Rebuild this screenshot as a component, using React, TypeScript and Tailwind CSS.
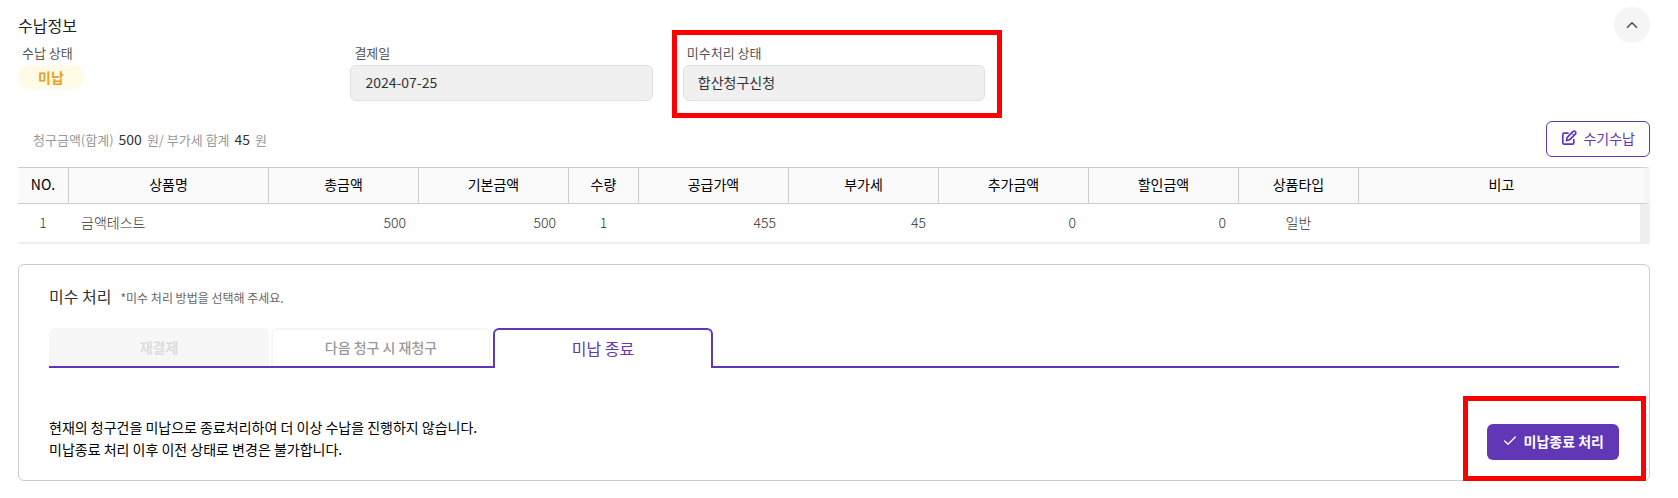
import { useState } from 'react'
import { Check, ChevronUp } from 'lucide-react'
import { clsx } from 'clsx'

const columns = [
  { label: 'NO.', width: 'w-[51px]', value: '1', align: 'text-center' },
  { label: '상품명', width: 'w-[200px]', value: '금액테스트', align: 'text-left' },
  { label: '총금액', width: 'w-[150px]', value: '500', align: 'text-right' },
  { label: '기본금액', width: 'w-[150px]', value: '500', align: 'text-right' },
  { label: '수량', width: 'w-[70px]', value: '1', align: 'text-center' },
  { label: '공급가액', width: 'w-[150px]', value: '455', align: 'text-right' },
  { label: '부가세', width: 'w-[150px]', value: '45', align: 'text-right' },
  { label: '추가금액', width: 'w-[150px]', value: '0', align: 'text-right' },
  { label: '할인금액', width: 'w-[150px]', value: '0', align: 'text-right' },
  { label: '상품타입', width: 'w-[120px]', value: '일반', align: 'text-center' },
  { label: '비고', width: '', value: '', align: 'text-left' },
]

const tabs = [
  { id: 'retry', label: '재결제', disabled: true },
  { id: 'next', label: '다음 청구 시 재청구', disabled: false },
  { id: 'close', label: '미납 종료', disabled: false },
]

function EditIcon() {
  return (
    <svg className="size-4" viewBox="0 0 16 16" fill="none" stroke="currentColor" strokeWidth="1.7" strokeLinecap="round" strokeLinejoin="round" aria-hidden="true">
      <path d="M7 3.2H3.2C2.4 3.2 1.8 3.8 1.8 4.6v8.2c0 .8.6 1.4 1.4 1.4h8.2c.8 0 1.4-.6 1.4-1.4V9.5" />
      <path d="M11.9 1.7a1.6 1.6 0 0 1 2.4 2.4L8.6 9.8l-3.2.8.8-3.2z" />
      <path d="M10.6 3.2l2.2 2.2" strokeWidth="1" />
    </svg>
  )
}

function Field({ id, label, value }: { id: string; label: string; value: string }) {
  return (
    <>
      <label htmlFor={id} className="block pb-0.5 pl-1 text-[13px] leading-5 text-[#555]">{label}</label>
      <input
        id={id}
        readOnly
        defaultValue={value}
        className="block h-9 w-full rounded-md border border-[#e0e0e0] bg-[#f0f0f0] px-3.5 pb-0.5 text-sm text-[#333] outline-none"
      />
    </>
  )
}

export default function App() {
  const [active, setActive] = useState('close')

  return (
    <main className="bg-white pt-[7px] pr-7 pb-4 pl-[18px] font-['Noto_Sans_CJK_KR','Noto_Sans',sans-serif] text-sm text-[#333]">
      <header className="flex h-9 items-center justify-between">
        <h2 className="text-base text-[#222]">수납정보</h2>
        <button type="button" aria-label="접기" className="flex size-9 items-center justify-center rounded-full bg-[#f5f5f5] text-[#555]">
          <ChevronUp className="size-[18px]" strokeWidth={2.2} />
        </button>
      </header>

      <section className="grid grid-cols-5 gap-[30px]">
        <div>
          <p className="pb-0.5 pl-1 text-[13px] leading-5 text-[#555]">수납 상태</p>
          <span className="flex h-6 w-[66px] items-center justify-center rounded-full bg-[#fffbe6] font-bold text-[#e8a02c]">미납</span>
        </div>
        <div>
          <Field id="paid-date" label="결제일" value="2024-07-25" />
        </div>
        <div className="relative">
          <Field id="unpaid-state" label="미수처리 상태" value="합산청구신청" />
          <div className="pointer-events-none absolute -top-[13px] -right-[17px] -bottom-[17px] -left-[11px] border-5 border-[#ff0000]" />
        </div>
      </section>

      <div className="mt-5 flex items-center justify-between">
        <p className="flex items-baseline gap-[5px] pl-[15px] text-[13px] text-[#999]">
          <span>청구금액(합계)</span>
          <b className="text-sm font-normal text-[#333]">500</b>
          <span>원/ 부가세 합계</span>
          <b className="text-sm font-normal text-[#333]">45</b>
          <span>원</span>
        </p>
        <button type="button" className="flex h-9 items-center gap-1.5 rounded-md border border-[#6137b6] px-3.5 pb-0.5 text-sm text-[#6137b6]">
          <EditIcon />
          수기수납
        </button>
      </div>

      <table className="mt-2.5 w-full table-fixed border-separate border-spacing-0">
        <thead>
          <tr>
            {columns.map((col) => (
              <th
                key={col.label}
                scope="col"
                className={clsx(
                  col.width,
                  'h-[37px] border-y border-r border-[#ccc] bg-[#fafafa] px-0 pt-0 pb-1 font-normal text-black last:border-r-6 last:border-r-[#f5f5f5]'
                )}
              >
                {col.label}
              </th>
            ))}
          </tr>
        </thead>
        <tbody>
          <tr>
            {columns.map((col) => (
              <td
                key={col.label}
                className={clsx(
                  col.align,
                  'h-10 border-b-2 border-[#eee] pt-0 pr-[13px] pb-0.5 pl-3 font-light last:border-r-10'
                )}
              >
                {col.value}
              </td>
            ))}
          </tr>
        </tbody>
      </table>

      <section className="mt-5 rounded-md border border-[#ccc] px-[30px] pt-[18px] pb-5">
        <div className="flex items-baseline gap-[9px]">
          <h3 className="text-base leading-[26px]">미수 처리</h3>
          <p className="text-xs text-[#666]">*미수 처리 방법을 선택해 주세요.</p>
        </div>

        <div role="tablist" className="mt-[19px] flex h-10 gap-0.5 border-b-2 border-[#6137b6]">
          {tabs.map((tab) => (
            <button
              key={tab.id}
              type="button"
              role="tab"
              aria-selected={active === tab.id}
              disabled={tab.disabled}
              onClick={() => setActive(tab.id)}
              className={clsx(
                'w-[220px] rounded-t-md',
                tab.disabled && 'bg-[#f7f7f7] font-bold text-[#ddd]',
                !tab.disabled && active !== tab.id && 'border-2 border-b-0 border-[#f5f5f5] pb-0.5 font-medium text-[#999]',
                active === tab.id && '-mb-0.5 border-2 border-b-0 border-[#6137b6] bg-white pb-0.5 text-base text-[#6137b6]'
              )}
            >
              {tab.label}
            </button>
          ))}
        </div>

        <div className="mt-12 flex items-end justify-between">
          <p className="leading-[22px] text-black">
            현재의 청구건을 미납으로 종료처리하여 더 이상 수납을 진행하지 않습니다.
            <br />
            미납종료 처리 이후 이전 상태로 변경은 불가합니다.
          </p>
          <div className="relative">
            <button type="button" className="flex h-9 items-center gap-1.5 rounded-md bg-[#6137b6] px-[15px] pb-0.5 font-bold text-white">
              <Check className="size-4" strokeWidth={2} />
              미납종료 처리
            </button>
            <div className="pointer-events-none absolute -top-7 -right-[27px] -bottom-[21px] -left-6 border-5 border-[#ff0000]" />
          </div>
        </div>
      </section>
    </main>
  )
}
